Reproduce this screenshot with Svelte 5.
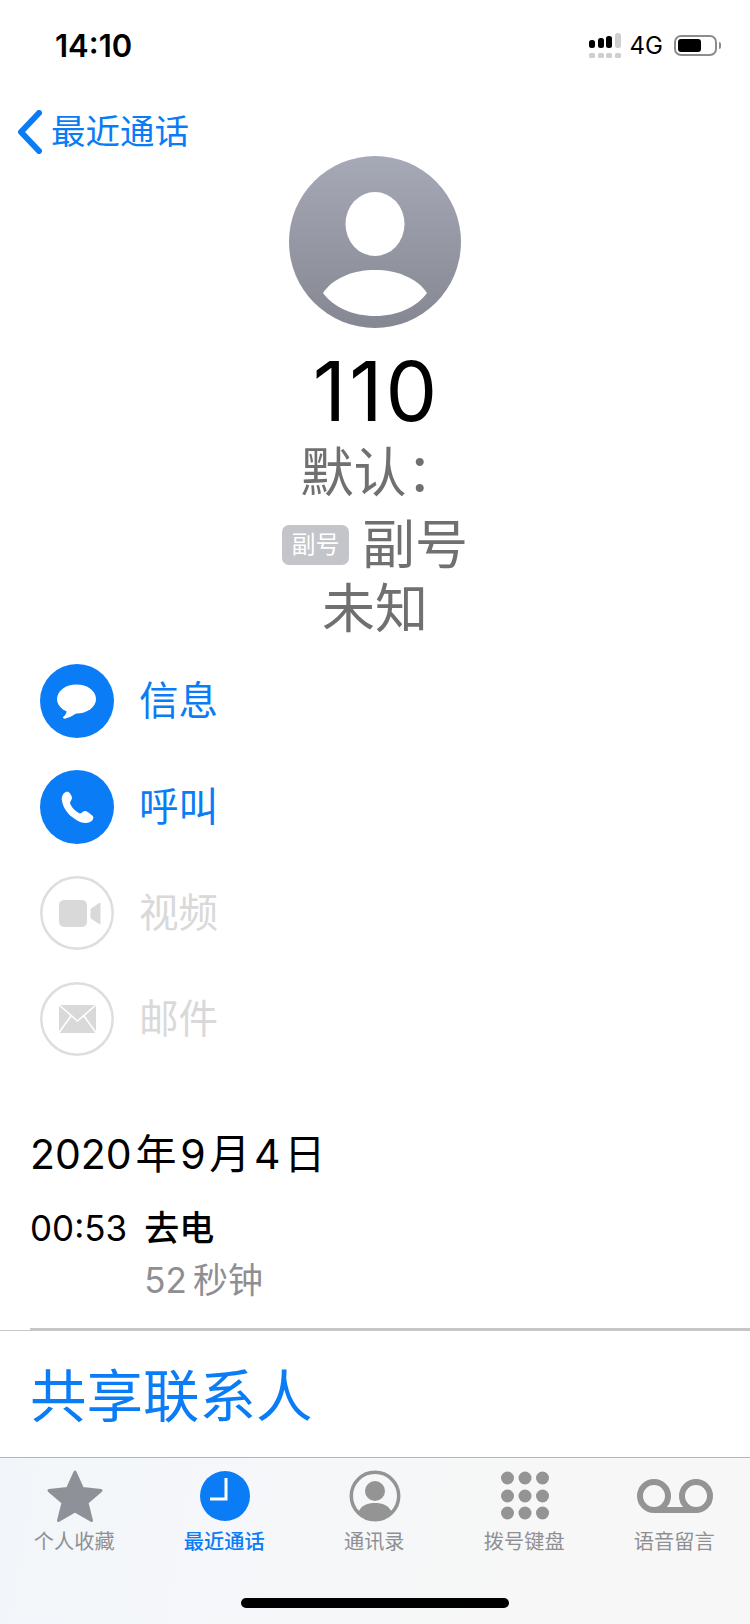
<script>
  const actions = [
    { label: '信息', icon: 'message', on: true },
    { label: '呼叫', icon: 'phone', on: true },
    { label: '视频', icon: 'video', on: false },
    { label: '邮件', icon: 'mail', on: false }
  ];
  const tabs = [
    { label: '个人收藏', icon: 'star' },
    { label: '最近通话', icon: 'clock', active: true },
    { label: '通讯录', icon: 'contact' },
    { label: '拨号键盘', icon: 'keypad' },
    { label: '语音留言', icon: 'voicemail' }
  ];
  const signal = [8, 10, 12, 15];
</script>

<div class="phone">
  <header class="status">
    <span class="time">14:10</span>
    <div class="status-right">
      <div class="signal">
        <div class="bars">
          {#each signal as h, i}
            <span class="bar" class:dim={i === 3} style="height: {h}px"></span>
          {/each}
        </div>
        <div class="dots">
          {#each signal as _}
            <span class="dot"></span>
          {/each}
        </div>
      </div>
      <span class="net">4G</span>
      <div class="battery"><span class="level"></span></div>
      <span class="cap"></span>
    </div>
  </header>

  <nav class="nav">
    <svg class="chevron" width="26" height="44" viewBox="0 0 26 44">
      <path d="M22 3 L4 22 L22 41" fill="none" stroke="#0a7cf6" stroke-width="6" stroke-linecap="round" stroke-linejoin="round" />
    </svg>
    <span class="nav-label">最近通话</span>
  </nav>

  <section class="profile">
    <svg class="avatar" width="172" height="172" viewBox="0 0 172 172">
      <defs>
        <linearGradient id="avatar-bg" x1="0" y1="0" x2="0" y2="1">
          <stop offset="0" stop-color="#a6a9b6" />
          <stop offset="1" stop-color="#858892" />
        </linearGradient>
      </defs>
      <circle cx="86" cy="86" r="86" fill="url(#avatar-bg)" />
      <ellipse cx="86" cy="68" rx="29.5" ry="32" fill="#fff" />
      <path d="M34 137 C44 122 64 114 86 114 C108 114 128 122 138 137 C128 151 108 160 86 160 C64 160 44 151 34 137Z" fill="#fff" />
    </svg>
    <h1>110</h1>
    <p class="line first">默认：</p>
    <p class="line sim"><span class="badge">副号</span><span>副号</span></p>
    <p class="line last">未知</p>
  </section>

  <section class="actions">
    {#each actions as a}
      <div class="action" class:on={a.on}>
        <svg width="74" height="74" viewBox="0 0 74 74">
          {#if a.on}
            <circle cx="37" cy="37" r="37" fill="#0a7cf6" />
          {:else}
            <circle cx="37" cy="37" r="35.7" fill="none" stroke="#dedede" stroke-width="2.5" />
          {/if}
          {#if a.icon === 'message'}
            <ellipse cx="36.5" cy="35" rx="19.5" ry="14.5" fill="#fff" />
            <path d="M27 44 C27 49 25 52 23 53 C23 55 25 55 27 54 C31 53 35 50 38 48Z" fill="#fff" />
          {:else if a.icon === 'phone'}
            <path d="M26 22 C23 23 21 27 22 31 C23 37 27 43 32 47 C36 50 41 53 45 53 C48 53 52 52 53 49 C54 47 53 46 51 44.5 C49 43 47 41 45 41 C43 41 42 43 40 43.5 C36 42 31 37 30 33 C30 31 32 30 32 28 C32 26 30 23 28.5 22 C28 21.6 27 21.6 26 22Z" fill="#fff" />
          {:else if a.icon === 'video'}
            <rect x="19" y="24" width="28" height="27" rx="5" fill="#d9d9d9" />
            <path d="M51 33 L60 27 V48 L51 42Z" fill="#d9d9d9" stroke="#d9d9d9" stroke-linejoin="round" />
          {:else}
            <rect x="19" y="23" width="37" height="28" fill="#d9d9d9" />
            <path d="M18 22 L37.5 39 L57 22 M18 52 L31 34 M57 52 L44 34" fill="none" stroke="#fff" stroke-width="1.6" />
          {/if}
        </svg>
        <span class="action-label">{a.label}</span>
      </div>
    {/each}
  </section>

  <section class="log">
    <div class="date">2020&#8202;年&#8202;9&#8202;月&#8202;4&#8202;日</div>
    <div class="call">
      <span class="call-time">00:53</span>
      <div>
        <div class="call-type">去电</div>
        <div class="call-len">52&#8201;秒钟</div>
      </div>
    </div>
  </section>

  <div class="sep"><span class="sep-thin"></span><span class="sep-thick"></span></div>

  <div class="share">共享联系人</div>

  <footer class="tabbar">
    <div class="tabs">
      {#each tabs as t}
        <div class="tab" class:active={t.active}>
          <svg width="76" height="56" viewBox="0 0 76 56">
            {#if t.icon === 'star'}
              <path d="M38 4 L45.5 20.5 L64 22.5 L50 34.5 L54.5 52.5 L38 43 L21.5 52.5 L26 34.5 L12 22.5 L30.5 20.5Z" fill="#8e9198" stroke="#8e9198" stroke-width="3" stroke-linejoin="round" />
            {:else if t.icon === 'clock'}
              <circle cx="38" cy="28" r="25" fill="#0a7cf6" />
              <path d="M39 10 V31 H23" fill="none" stroke="#fff" stroke-width="3" />
            {:else if t.icon === 'contact'}
              <circle cx="38" cy="28" r="23.7" fill="none" stroke="#949494" stroke-width="3.5" />
              <circle cx="38" cy="23" r="10" fill="#949494" />
              <path d="M21 45 C24 37 31 35 38 35 C45 35 52 37 55 45 C50 50 44 52 38 52 C32 52 26 50 21 45Z" fill="#949494" />
            {:else if t.icon === 'keypad'}
              {#each [20.5, 38, 55.5] as x}
                {#each [10, 28, 45] as y}
                  <circle cx={x} cy={y} r="6.5" fill="#949494" />
                {/each}
              {/each}
            {:else}
              <circle cx="17" cy="28" r="14" fill="none" stroke="#949494" stroke-width="6" />
              <circle cx="59" cy="28" r="14" fill="none" stroke="#949494" stroke-width="6" />
              <path d="M17 42 H59" stroke="#949494" stroke-width="6" />
            {/if}
          </svg>
          <span class="tab-label">{t.label}</span>
        </div>
      {/each}
    </div>
    <div class="home"></div>
  </footer>
</div>

<style>
  :global(body) {
    margin: 0;
    background: #fff;
  }

  .phone {
    width: 750px;
    height: 1624px;
    display: flex;
    flex-direction: column;
    overflow: hidden;
    background: #fff;
    color: #000;
    font-family: "Inter", "Noto Sans CJK SC", sans-serif;
  }

  .status {
    height: 90px;
    flex-shrink: 0;
    display: flex;
    align-items: center;
    justify-content: space-between;
    padding: 0 29px 0 55px;
    box-sizing: border-box;
  }

  .time {
    font-size: 31px;
    font-weight: 600;
  }

  .status-right {
    display: flex;
    align-items: center;
  }

  .signal {
    display: flex;
    flex-direction: column;
    gap: 5px;
    margin-right: 9px;
  }

  .bars {
    display: flex;
    align-items: flex-end;
    gap: 2.5px;
  }

  .bar {
    width: 6px;
    border-radius: 2.5px;
    background: #000;
  }

  .bar.dim {
    background: #cfcfcf;
  }

  .dots {
    display: flex;
    gap: 2.5px;
  }

  .dot {
    width: 6px;
    height: 5px;
    border-radius: 1.5px;
    background: #cfcfcf;
  }

  .net {
    font-size: 24px;
    margin-right: 11px;
  }

  .battery {
    width: 43px;
    height: 21px;
    box-sizing: border-box;
    border: 2px solid #8c8c8c;
    border-radius: 7px;
    padding: 2px;
    display: flex;
  }

  .level {
    width: 23px;
    border-radius: 3px;
    background: #000;
  }

  .cap {
    width: 2px;
    height: 7px;
    margin-left: 2px;
    border-radius: 0 2px 2px 0;
    background: #8c8c8c;
  }

  .nav {
    height: 44px;
    margin-top: 20px;
    flex-shrink: 0;
    display: flex;
    align-items: center;
    padding-left: 17px;
    gap: 8px;
    color: #0a7cf6;
    font-size: 34.5px;
    font-weight: 400;
  }

  .nav-label {
    padding-bottom: 7px;
  }

  .profile {
    margin-top: 2px;
    display: flex;
    flex-direction: column;
    align-items: center;
    flex-shrink: 0;
  }

  .avatar {
    display: block;
  }

  h1 {
    margin: 20px 0 0;
    padding-left: 3px;
    font-size: 82px;
    line-height: 88px;
    font-weight: 380;
    letter-spacing: 3px;
  }

  .line {
    margin: 0;
    font-size: 53px;
    line-height: 62px;
    font-weight: 400;
    color: #707070;
  }

  .line.first {
    margin: 6px 0 10px;
    padding-left: 10px;
  }

  .line.last {
    margin-top: 2px;
  }

  .sim {
    display: flex;
    align-items: center;
    gap: 13px;
  }

  .badge {
    width: 67px;
    height: 40px;
    border-radius: 7px;
    background: #c4c4cb;
    color: #fff;
    font-size: 24px;
    line-height: 40px;
    font-weight: 400;
    text-align: center;
  }

  .actions {
    margin-top: 24px;
    padding-left: 40px;
    display: flex;
    flex-direction: column;
    gap: 32px;
    flex-shrink: 0;
  }

  .action {
    display: flex;
    align-items: center;
    gap: 25px;
    font-size: 39.5px;
    font-weight: 400;
    color: #d9d9d9;
  }

  .action.on {
    color: #0a7cf6;
  }

  .action-label {
    padding-bottom: 7px;
  }

  .action svg {
    display: block;
  }

  .log {
    margin-top: 70px;
    padding-left: 30px;
    flex-shrink: 0;
  }

  .date {
    font-size: 41px;
    line-height: 56px;
    font-weight: 400;
  }

  .call {
    margin-top: 20px;
    display: flex;
    gap: 17px;
    font-size: 35px;
    line-height: 52px;
  }

  .call-time {
    font-weight: 400;
  }

  .call-type {
    font-weight: 500;
  }

  .call-len {
    color: #8e8e93;
    font-weight: 400;
  }

  .sep {
    margin-top: 22px;
    display: flex;
    align-items: flex-end;
    flex-shrink: 0;
  }

  .sep-thin {
    width: 30px;
    height: 1px;
    background: #c8c8c8;
  }

  .sep-thick {
    flex: 1;
    height: 3px;
    background: #c6c6c6;
  }

  .share {
    margin-top: 31px;
    padding-left: 30px;
    color: #0a7cf6;
    font-size: 56.5px;
    line-height: 70px;
    font-weight: 400;
    flex-shrink: 0;
  }

  .tabbar {
    margin-top: auto;
    height: 167px;
    box-sizing: border-box;
    border-top: 1px solid #b4b4b4;
    background: linear-gradient(100deg, #f2f6fa 0%, #f6f7f9 40%, #f7f7f7 70%);
    display: flex;
    flex-direction: column;
    position: relative;
    flex-shrink: 0;
  }

  .tabs {
    display: grid;
    grid-template-columns: repeat(5, 1fr);
    padding-top: 10px;
  }

  .tab {
    display: flex;
    flex-direction: column;
    align-items: center;
    color: #8e9094;
    font-size: 20.2px;
    line-height: 28px;
    gap: 4px;
  }

  .tab-label {
    padding-right: 1.5px;
  }

  .tab svg {
    display: block;
  }

  .tab.active {
    color: #0a7cf6;
    font-weight: 500;
  }

  .home {
    position: absolute;
    left: 241px;
    bottom: 16px;
    width: 268px;
    height: 10px;
    border-radius: 5px;
    background: #000;
  }
</style>
